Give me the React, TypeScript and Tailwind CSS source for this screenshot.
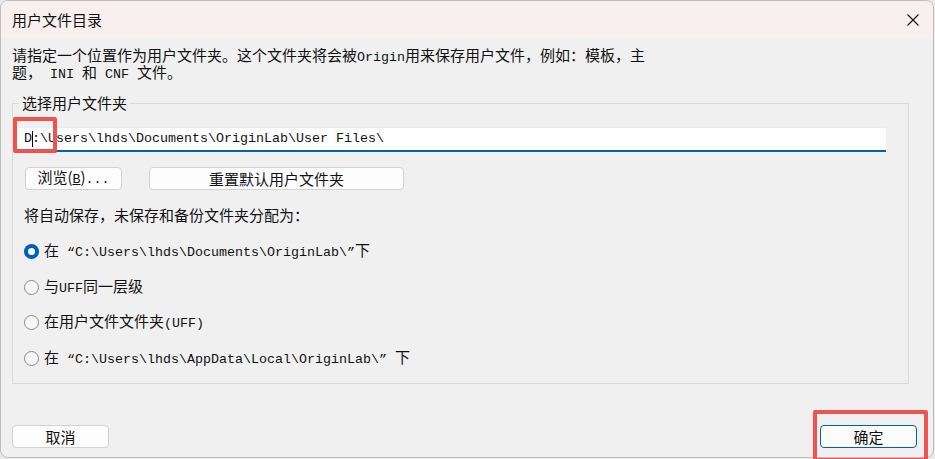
import React from 'react';

// Split a string into ASCII runs (mono, half width) and CJK runs
const Mix = ({ text }: { text: string }) => {
  const parts = text.split(/([\x20-\x7e“”]+)/);
  return (
    <>
      {parts.map((p, i) =>
        i % 2 ? (
          <span key={i} className="font-['Liberation_Mono',monospace] text-[13.33px] leading-[16px] whitespace-pre">
            {p}
          </span>
        ) : (
          <React.Fragment key={i}>{p}</React.Fragment>
        ),
      )}
    </>
  );
};

const Radio = ({ checked, label }: { checked?: boolean; label: string }) => (
  <div className="flex h-[35.5px] items-center gap-[5px] pl-[11px]">
    {checked ? (
      <span className="flex h-[15px] w-[15px] items-center justify-center rounded-full bg-[#005fb8]">
        <span className="h-[7px] w-[7px] rounded-full bg-white" />
      </span>
    ) : (
      <span className="h-[15px] w-[15px] rounded-full border border-[#8a8a8a] bg-[#f7f7f7]" />
    )}
    <span className="whitespace-pre">
      <Mix text={label} />
    </span>
  </div>
);

export default function App() {
  return (
    <div className="relative h-[459px] w-[935px] overflow-hidden bg-[#e9e9e9] text-[#111] font-['Noto_Sans_CJK_SC',sans-serif] text-[15px] leading-[16px]">
      <div className="flex h-[458px] w-[934px] flex-col overflow-hidden rounded-[8px] border border-[#bdbdbd] bg-[#f0f0f0]">
        {/* Title bar */}
        <div className="flex h-[37px] shrink-0 items-center justify-between bg-[#f8efee] pl-[11px] pr-[13px]">
          <span className="text-[15px]">用户文件目录</span>
          <svg width="12" height="12" viewBox="0 0 12 12" className="mr-[1px]">
            <path d="M0.5 0.5 L11.5 11.5 M11.5 0.5 L0.5 11.5" stroke="#111" strokeWidth="1.1" />
          </svg>
        </div>

        {/* Body */}
        <div className="flex flex-1 flex-col pl-[11px] pt-[9px]">
          <div className="flex h-[17px] items-center whitespace-pre leading-[17px]">
            <span>
              <Mix text="请指定一个位置作为用户文件夹。这个文件夹将会被Origin用来保存用户文件，例如：模板，主" />
            </span>
          </div>
          <div className="flex h-[17px] items-center whitespace-pre leading-[17px]">
            <span>
              <Mix text="题， INI 和 CNF 文件。" />
            </span>
          </div>

          <fieldset className="mt-[14px] w-[897px] border border-[#dadada] pb-[7px]">
            <legend className="ml-[6px] px-[3px]">选择用户文件夹</legend>

            <div className="ml-[3px] mt-[16px] flex h-[25px] w-[870px] items-center border-b-2 border-t border-[#0063b1] border-t-[#ececec] bg-white pl-[8px]">
              <span className="font-['Liberation_Mono',monospace] text-[13.33px] whitespace-pre">D</span>
              <span className="mx-[-0.5px] h-[16px] w-[1px] bg-black" />
              <span className="font-['Liberation_Mono',monospace] text-[13.33px] whitespace-pre">
                {':\\Users\\lhds\\Documents\\OriginLab\\User Files\\'}
              </span>
            </div>

            <div className="ml-[12px] mt-[15px] flex gap-[27px]">
              <button className="h-[23px] w-[97px] rounded-[4px] border border-[#d2d2d2] bg-[#fdfdfd]">
                浏览(<span className="underline font-['Liberation_Mono',monospace] text-[13.33px]">B</span>)
                <span className="font-['Liberation_Mono',monospace] text-[13.33px]">...</span>
              </button>
              <button className="h-[23px] w-[255px] rounded-[4px] border border-[#d2d2d2] bg-[#fdfdfd]">
                重置默认用户文件夹
              </button>
            </div>

            <p className="ml-[11px] mt-[17px]">将自动保存，未保存和备份文件夹分配为：</p>

            <div className="mt-[11px] flex flex-col">
              <Radio checked label={'在 “C:\\Users\\lhds\\Documents\\OriginLab\\”下'} />
              <Radio label="与UFF同一层级" />
              <Radio label="在用户文件文件夹(UFF)" />
              <Radio label={'在 “C:\\Users\\lhds\\AppData\\Local\\OriginLab\\” 下'} />
            </div>
          </fieldset>

          <div className="mt-[41px] flex w-[905px] justify-between">
            <button className="h-[23px] w-[97px] rounded-[4px] border border-[#d2d2d2] bg-[#fdfdfd]">取消</button>
            <button className="h-[23px] w-[97px] rounded-[4px] border border-[#005fb8] bg-[#fbfbfb]">确定</button>
          </div>
        </div>
      </div>

      {/* Red highlight annotations */}
      <div className="absolute left-[13px] top-[117px] h-[36px] w-[44px] rounded-[2px] border-4 border-[#ef5350]" />
      <div className="absolute left-[813px] top-[410px] h-[52px] w-[115px] rounded-[2px] border-4 border-[#ef5350]" />
    </div>
  );
}
